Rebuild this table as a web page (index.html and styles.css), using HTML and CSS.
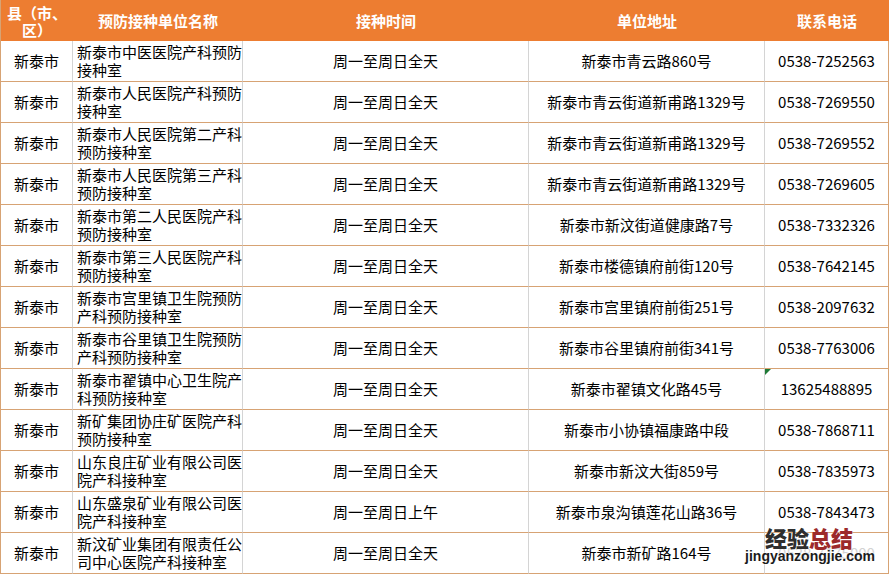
FILE: index.html
```html
<!DOCTYPE html>
<html lang="zh-CN">
<head>
<meta charset="utf-8">
<title>新泰市产科预防接种室</title>
<link rel="stylesheet" href="styles.css">
</head>
<body>
<div class="sheet">
  <div class="grid">
    <div class="hd hd-county">县（市、<br>区）</div>
    <div class="hd">预防接种单位名称</div>
    <div class="hd">接种时间</div>
    <div class="hd">单位地址</div>
    <div class="hd">联系电话</div>

    <div class="c ctr">新泰市</div>
    <div class="c name">新泰市中医医院产科预防<br>接种室</div>
    <div class="c ctr">周一至周日全天</div>
    <div class="c ctr">新泰市青云路860号</div>
    <div class="c ctr">0538-7252563</div>

    <div class="c ctr">新泰市</div>
    <div class="c name">新泰市人民医院产科预防<br>接种室</div>
    <div class="c ctr">周一至周日全天</div>
    <div class="c ctr">新泰市青云街道新甫路1329号</div>
    <div class="c ctr">0538-7269550</div>

    <div class="c ctr">新泰市</div>
    <div class="c name">新泰市人民医院第二产科<br>预防接种室</div>
    <div class="c ctr">周一至周日全天</div>
    <div class="c ctr">新泰市青云街道新甫路1329号</div>
    <div class="c ctr">0538-7269552</div>

    <div class="c ctr">新泰市</div>
    <div class="c name">新泰市人民医院第三产科<br>预防接种室</div>
    <div class="c ctr">周一至周日全天</div>
    <div class="c ctr">新泰市青云街道新甫路1329号</div>
    <div class="c ctr">0538-7269605</div>

    <div class="c ctr">新泰市</div>
    <div class="c name">新泰市第二人民医院产科<br>预防接种室</div>
    <div class="c ctr">周一至周日全天</div>
    <div class="c ctr">新泰市新汶街道健康路7号</div>
    <div class="c ctr">0538-7332326</div>

    <div class="c ctr">新泰市</div>
    <div class="c name">新泰市第三人民医院产科<br>预防接种室</div>
    <div class="c ctr">周一至周日全天</div>
    <div class="c ctr">新泰市楼德镇府前街120号</div>
    <div class="c ctr">0538-7642145</div>

    <div class="c ctr">新泰市</div>
    <div class="c name">新泰市宫里镇卫生院预防<br>产科预防接种室</div>
    <div class="c ctr">周一至周日全天</div>
    <div class="c ctr">新泰市宫里镇府前街251号</div>
    <div class="c ctr">0538-2097632</div>

    <div class="c ctr">新泰市</div>
    <div class="c name">新泰市谷里镇卫生院预防<br>产科预防接种室</div>
    <div class="c ctr">周一至周日全天</div>
    <div class="c ctr">新泰市谷里镇府前街341号</div>
    <div class="c ctr">0538-7763006</div>

    <div class="c ctr">新泰市</div>
    <div class="c name">新泰市翟镇中心卫生院产<br>科预防接种室</div>
    <div class="c ctr">周一至周日全天</div>
    <div class="c ctr">新泰市翟镇文化路45号</div>
    <div class="c ctr flag">13625488895</div>

    <div class="c ctr">新泰市</div>
    <div class="c name">新矿集团协庄矿医院产科<br>预防接种室</div>
    <div class="c ctr">周一至周日全天</div>
    <div class="c ctr">新泰市小协镇福康路中段</div>
    <div class="c ctr">0538-7868711</div>

    <div class="c ctr">新泰市</div>
    <div class="c name">山东良庄矿业有限公司医<br>院产科接种室</div>
    <div class="c ctr">周一至周日全天</div>
    <div class="c ctr">新泰市新汶大街859号</div>
    <div class="c ctr">0538-7835973</div>

    <div class="c ctr">新泰市</div>
    <div class="c name">山东盛泉矿业有限公司医<br>院产科接种室</div>
    <div class="c ctr">周一至周日上午</div>
    <div class="c ctr">新泰市泉沟镇莲花山路36号</div>
    <div class="c ctr">0538-7843473</div>

    <div class="c ctr">新泰市</div>
    <div class="c name">新汶矿业集团有限责任公<br>司中心医院产科接种室</div>
    <div class="c ctr">周一至周日全天</div>
    <div class="c ctr">新泰市新矿路164号</div>
    <div class="c ctr faded">0538-7175000</div>
  </div>
  <div class="watermark">
    <div class="wm-title"><span class="wm-dark">经验</span><span class="wm-red">总结</span></div>
    <div class="wm-url">jingyanzongjie.com</div>
  </div>
</div>
</body>
</html>
```

FILE: styles.css
```css
html, body {
  margin: 0;
  padding: 0;
  background: #ffffff;
}

body {
  font-family: "Noto Sans CJK SC", "Noto Sans", sans-serif;
  font-size: 15px;
  color: #000000;
  width: 890px;
  height: 575px;
  overflow: hidden;
}

.sheet {
  position: relative;
  width: 890px;
  height: 575px;
}

.grid {
  display: grid;
  grid-template-columns: 72px 170px 286px 236px 124px;
  grid-auto-rows: 41px;
  width: 888px;
  border-left: 1px solid #d7a374;
}

.hd {
  background: #ed7d31;
  color: #ffffff;
  font-weight: bold;
  display: flex;
  align-items: center;
  justify-content: center;
  text-align: center;
  line-height: 17px;
  padding-bottom: 1px;
  box-sizing: border-box;
}

.hd-county {
  padding-top: 2px;
}

.c {
  box-sizing: border-box;
  border-right: 1px solid #d4d4d4;
  border-bottom: 1px solid #d7a374;
  display: flex;
  align-items: center;
  line-height: 18px;
  white-space: nowrap;
  position: relative;
}

.c:nth-child(5n) {
  border-right-color: #d7a374;
}

.ctr {
  justify-content: center;
  text-align: center;
}

.name {
  justify-content: flex-start;
  padding-left: 4px;
}

.flag::before {
  content: "";
  position: absolute;
  left: 0;
  top: 0;
  width: 0;
  height: 0;
  border-top: 6px solid #1f7a36;
  border-right: 6px solid transparent;
}

.faded {
  color: #d2d2d2;
}

.watermark {
  position: absolute;
  right: 15px;
  top: 525px;
  text-align: right;
  white-space: nowrap;
}

.wm-title {
  font-family: "Noto Sans CJK SC", sans-serif;
  font-weight: 900;
  font-size: 22px;
  line-height: 24px;
  padding-right: 22px;
  text-shadow: 0 0 1px #ffffff;
}

.wm-dark {
  color: #2e2e2e;
}

.wm-red {
  color: #9c2a2a;
}

.wm-url {
  font-family: "Liberation Sans", Arial, sans-serif;
  font-weight: bold;
  font-size: 14px;
  line-height: 14px;
  color: #1c1c1c;
  text-shadow: 0 0 2px #ffffff, 0 0 2px #ffffff;
}
```
